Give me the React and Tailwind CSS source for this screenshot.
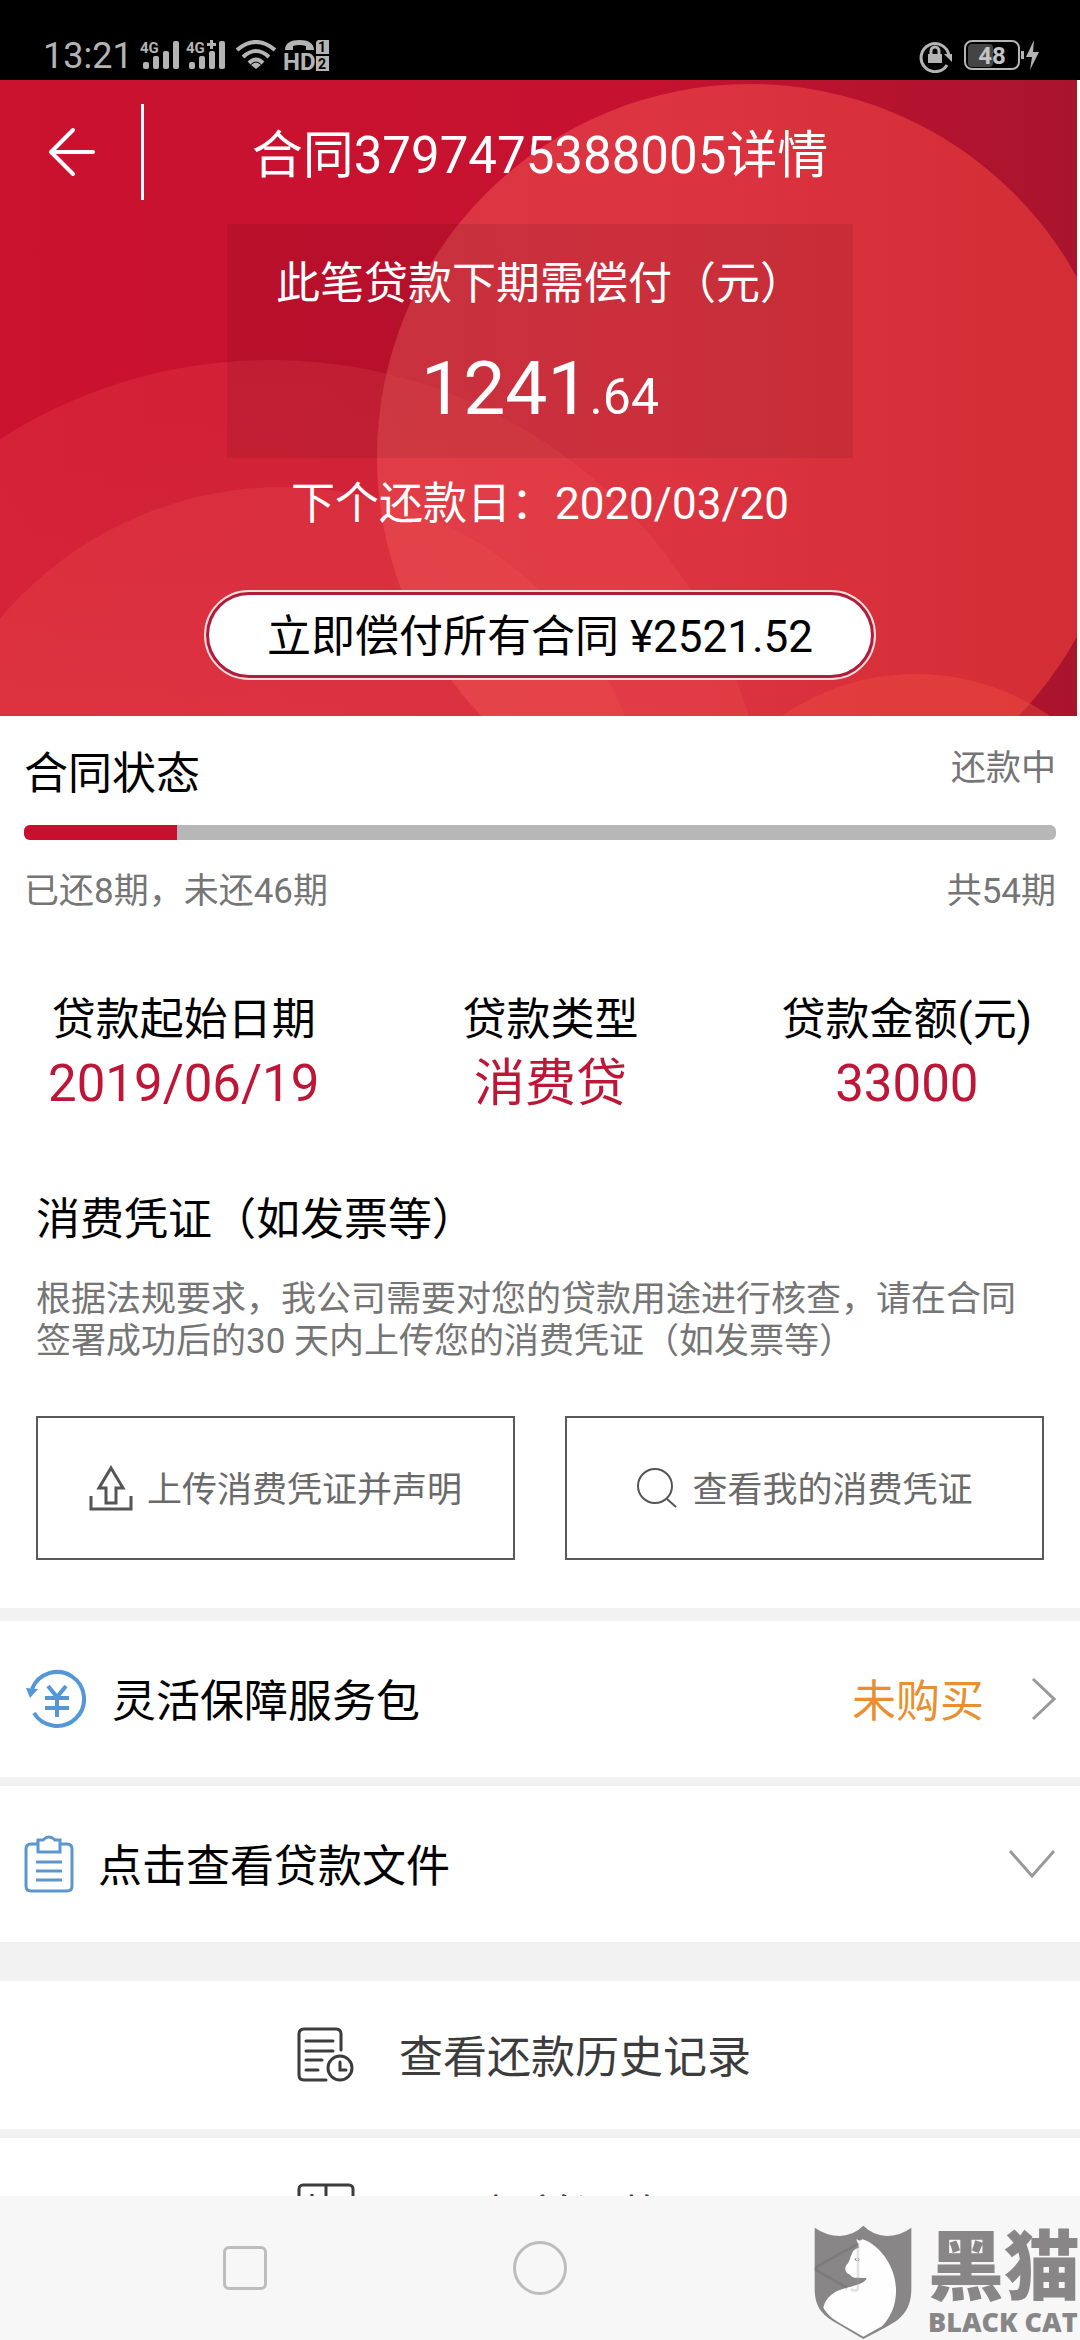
import React from "react";

function Signal({ label, plus }) {
  return (
    <svg className="overflow-visible" width="42" height="32" viewBox="0 0 42 32" fill="#b4b4b4" aria-hidden="true">
      <text x="1" y="13" fontSize="15" fontWeight="700" fontFamily="Roboto, sans-serif">{label}</text>
      {plus && <path d="M22 3h3V0h3v3h3v3h-3v3h-3V6h-3z" />}
      <rect x="4" y="22" width="6" height="7" rx="2" />
      <rect x="14" y="16" width="6" height="13" rx="2" />
      <rect x="24" y="11" width="6" height="18" rx="2" />
      <rect x="34" y="1" width="6" height="28" rx="2" />
    </svg>
  );
}

function StatusBar() {
  return (
    <div className="flex h-20 shrink-0 items-center justify-between bg-black pr-10 pl-[43px] pt-8 text-[#b4b4b4]">
      <div className="flex items-center">
        <span className="w-24 text-[36px] leading-8">13:21</span>
        <div className="flex items-center gap-1">
          <Signal label="4G" />
          <Signal label="4G" plus />
          <svg className="ml-1" width="42" height="32" viewBox="0 0 42 32" fill="none" stroke="#b4b4b4" strokeWidth="4" aria-hidden="true">
            <path d="M2 10Q21 -6 40 10" />
            <path d="M8 17Q21 5 34 17" />
            <path d="M14 23Q21 16 28 23" />
            <path d="M21 29l-5-4q5-5 10 0z" fill="#b4b4b4" stroke="none" />
          </svg>
          <svg className="ml-1 overflow-visible" width="44" height="32" viewBox="0 0 44 32" fill="#b4b4b4" aria-hidden="true">
            <path d="M0 10C0 3 6 0 14.500 0S29 3 29 10H21V6Q14.500 4 8 6V10z" />
            <text x="-2" y="30" fontSize="24" fontWeight="700" fontFamily="Roboto, sans-serif">HD</text>
            <path d="M33 0h11v14H31V2zM31 16h13v15H31z" />
            <g fill="#000" fontSize="14" fontWeight="700" fontFamily="Roboto, sans-serif">
              <text x="33" y="12">1</text>
              <text x="33" y="29">2</text>
            </g>
          </svg>
        </div>
      </div>
      <div className="flex items-center">
        <svg width="33" height="33" viewBox="0 0 33 33" fill="none" stroke="#b4b4b4" strokeWidth="3" aria-hidden="true">
          <path d="M28 25A14 14 0 1 1 30 16" />
          <path d="M25 14h8v8z" fill="#b4b4b4" stroke="none" />
          <rect x="9" y="14" width="14" height="9" fill="#b4b4b4" stroke="none" />
          <path d="M12 14v-3a4 4 0 0 1 8 0v3" />
        </svg>
        <svg className="ml-3" width="76" height="32" viewBox="0 0 76 32" aria-hidden="true">
          <rect x="4" y="4" width="25" height="23" rx="4" fill="#444" />
          <rect x="1" y="1" width="54" height="28" rx="7" fill="none" stroke="#b4b4b4" strokeWidth="2" />
          <text x="28" y="24" textAnchor="middle" fontSize="24" fontWeight="700" fill="#c4c4c4" fontFamily="Roboto, sans-serif">48</text>
          <rect x="57" y="11" width="3" height="8" fill="#b4b4b4" />
          <path d="M70 0L62 17h6l-2 13 9-18h-6z" fill="#b4b4b4" />
        </svg>
      </div>
    </div>
  );
}

function HeroArt() {
  return (
    <div className="absolute inset-y-0 left-0 right-[3px]">
      <svg className="h-full w-full" viewBox="0 80 1077 636" preserveAspectRatio="xMidYMid slice" aria-hidden="true">
        <defs>
          <linearGradient id="base" x1="0" x2="1">
            <stop offset="0" stopColor="#cb122f" />
            <stop offset="0.6" stopColor="#c51230" />
            <stop offset="1" stopColor="#a9142d" />
          </linearGradient>
          <linearGradient id="big" gradientUnits="userSpaceOnUse" x1="377" x2="1077" y1="0" y2="0">
            <stop offset="0" stopColor="#db3644" />
            <stop offset="0.400" stopColor="#dc3441" />
            <stop offset="1" stopColor="#d32d35" />
          </linearGradient>
          <linearGradient id="left" gradientUnits="userSpaceOnUse" x1="0" x2="0" y1="360" y2="716">
            <stop offset="0" stopColor="#ee5050" stopOpacity="0.240" />
            <stop offset="1" stopColor="#ee5050" stopOpacity="0.300" />
          </linearGradient>
        </defs>
        <rect y="80" width="1077" height="636" fill="url(#base)" />
        <circle cx="750" cy="457" r="373" fill="url(#big)" />
        <circle cx="270" cy="860" r="500" fill="url(#left)" />
        <circle cx="283" cy="857" r="370" fill="url(#left)" />
        <circle cx="916" cy="909" r="235" fill="#f05042" fillOpacity="0.400" />
      </svg>
    </div>
  );
}

function Hero() {
  return (
    <header className="relative pt-6 pb-9 text-white">
      <HeroArt />
      <div className="relative">
        <div className="flex h-24 items-center">
          <button type="button" aria-label="返回" className="flex h-24 w-36 items-center border-r-[3px] border-white pl-12">
            <svg width="48" height="50" viewBox="0 0 48 50" fill="none" stroke="#fff" strokeWidth="4" strokeLinecap="round" strokeLinejoin="round">
              <path d="M45 25H3M25 3L3 25l22 22" />
            </svg>
          </button>
          <h1 className="flex-1 pt-2 pr-36 text-center text-[51px] leading-[60px]">合同3797475388005详情</h1>
        </div>
        <div className="mx-auto mt-6 h-[234px] w-[58%] bg-black/8 pt-7 text-center">
          <p className="text-[44px] leading-[64px]">此笔贷款下期需偿付（元）</p>
          <p className="mt-6 text-[75px] leading-[96px]">
            1241<span className="text-[50px] leading-none">.64</span>
          </p>
        </div>
        <p className="mt-[14px] text-center text-[44px] leading-[64px]">下个还款日：2020/03/20</p>
        <div className="mt-[54px] flex justify-center">
          <button type="button" className="rounded-full border-2 border-[#fbdcdc] bg-[#b01c3c] p-[3px] text-black">
            <span className="block rounded-full bg-white px-[58px] pt-1 text-[44px] leading-[76px]">立即偿付所有合同 ¥2521.52</span>
          </button>
        </div>
      </div>
    </header>
  );
}

function ContractStatus() {
  const paid = 8;
  const total = 54;
  return (
    <section className="px-6 pt-6">
      <div className="flex justify-between">
        <h2 className="text-[44px] leading-[68px] text-black">合同状态</h2>
        <span className="text-[35px] leading-[58px] text-[#757575]">还款中</span>
      </div>
      <div role="progressbar" aria-valuenow={paid} aria-valuemax={total} aria-label="合同状态" className="mt-[17px] h-[15px] overflow-hidden rounded-md bg-[#b7b7b7]">
        <div className="h-full bg-[#c8102e]" style={{ width: `${(paid / total) * 100}%` }} />
      </div>
      <div className="mt-7 flex justify-between text-[35px] leading-[48px] text-[#757575]">
        <span>已还8期，未还46期</span>
        <span>共54期</span>
      </div>
    </section>
  );
}

const facts = [
  ["贷款起始日期", "2019/06/19"],
  ["贷款类型", "消费贷"],
  ["贷款金额(元)", "33000"],
];

function Facts() {
  return (
    <dl className="mt-[72px] flex justify-between px-12 text-center">
      {facts.map(([label, value]) => (
        <div key={label}>
          <dt className="text-[44px] leading-[64px] text-black">{label}</dt>
          <dd className="text-[51px] leading-[64px] text-[#be1637]">{value}</dd>
        </div>
      ))}
    </dl>
  );
}

function Voucher() {
  return (
    <section className="px-9 pt-[72px] pb-12">
      <h2 className="text-[44px] leading-[64px] text-black">消费凭证（如发票等）</h2>
      <p className="mt-[27px] text-[35px] leading-[42px] text-[#757575]">
        根据法规要求，我公司需要对您的贷款用途进行核查，请在合同签署成功后的30 天内上传您的消费凭证（如发票等）
      </p>
      <div className="mt-[53px] grid grid-cols-2 gap-[50px] text-[35px] text-[#6a6a6a]">
        <button type="button" className="flex h-36 items-center justify-center gap-[14px] border-2 border-[#5a5a5a]">
          <svg width="44" height="46" viewBox="0 0 44 46" fill="none" stroke="#555" strokeWidth="3">
            <path d="M22 3L34 23H27V38H17V23H10z" />
            <path d="M2 31V44H42V31" />
          </svg>
          <span className="pt-1.5">上传消费凭证并声明</span>
        </button>
        <button type="button" className="flex h-36 items-center justify-center gap-[14px] border-2 border-[#5a5a5a]">
          <svg width="42" height="42" viewBox="0 0 42 42" fill="none" stroke="#555" strokeWidth="2">
            <circle cx="19" cy="19" r="17" />
            <path d="M31 32L40 40" />
          </svg>
          <span className="pt-1.5">查看我的消费凭证</span>
        </button>
      </div>
    </section>
  );
}

function Rows() {
  return (
    <>
      <button type="button" className="flex h-[156px] w-full items-center bg-white px-6 text-[44px] text-black">
        <svg width="62" height="62" viewBox="0 0 62 62" fill="none" stroke="#5497d8" strokeWidth="4" aria-hidden="true">
          <path d="M8 21A27 27 0 1 1 10 45" />
          <path d="M2 20L14 21 6 30z" fill="#5497d8" stroke="none" />
          <path d="M24 18l9 11 9-11M21 30h24M21 40h24M33 29v20" />
        </svg>
        <span className="ml-[26px] flex-1 pt-1.5 text-left">灵活保障服务包</span>
        <span className="pt-1.5 text-[#e8902f]">未购买</span>
        <svg className="ml-[46px]" width="26" height="46" viewBox="0 0 26 46" fill="none" stroke="#999" strokeWidth="3" aria-hidden="true">
          <path d="M3 3L24 23 3 43" />
        </svg>
      </button>
      <button type="button" className="mt-[9px] flex h-[156px] w-full items-center bg-white px-6 text-[44px] text-black">
        <svg width="50" height="58" viewBox="0 0 50 58" fill="none" stroke="#5b97cc" strokeWidth="3" aria-hidden="true">
          <path d="M14 9H7Q2 9 2 14V51Q2 56 7 56H43Q48 56 48 51V14Q48 9 43 9H36" />
          <path d="M14 17V5H19Q25 -1 31 5H36V17z" />
          <path d="M12 27H38M12 36H38M12 45H38" />
        </svg>
        <span className="ml-6 flex-1 pt-1.5 text-left">点击查看贷款文件</span>
        <svg width="48" height="30" viewBox="0 0 48 30" fill="none" stroke="#999" strokeWidth="3" aria-hidden="true">
          <path d="M2 2L24 27 46 2" />
        </svg>
      </button>
      <button type="button" className="mt-[39px] flex h-[148px] w-full items-center justify-center bg-white pr-8 text-[44px] text-[#3c3c3c]">
        <svg width="58" height="56" viewBox="0 0 58 56" fill="none" stroke="#3c3c3c" strokeWidth="3" strokeLinecap="round" aria-hidden="true">
          <path d="M29 53H7Q2 53 2 48V7Q2 2 7 2H39Q44 2 44 7V23" />
          <path d="M9 14H36M9 24H36M9 33H25M9 43H21" />
          <circle cx="43" cy="41" r="12" />
          <path d="M43 35V43H49" />
        </svg>
        <span className="ml-11 w-[352px] pt-1.5">查看还款历史记录</span>
      </button>
      <button type="button" className="mt-[9px] flex h-[148px] w-full items-center justify-center bg-white pr-8 text-[44px] text-[#3c3c3c]">
        <svg width="58" height="58" viewBox="0 0 58 58" fill="none" stroke="#3c3c3c" strokeWidth="3" aria-hidden="true">
          <rect x="2" y="2" width="54" height="54" rx="4" />
          <path d="M29 2V56M2 29H56M15 11V21M10 16H20M36 16H48M10 38L20 48M20 38L10 48M36 40H48M36 46H48" />
        </svg>
        <span className="ml-11 w-[352px] pt-2.5">提前还款</span>
      </button>
    </>
  );
}

function Watermark() {
  return (
    <div className="pointer-events-none absolute right-0 bottom-0 flex items-end opacity-90" aria-label="黑猫 BLACK CAT">
      <svg width="98" height="116" viewBox="152 132 294 348" aria-hidden="true">
        <path
          fill="#7c7a7b"
          fillRule="evenodd"
          d="M154 143Q190 168 230 168Q272 165 300 137Q328 165 370 168Q410 168 444 143V325C444 385 420 415 370 440L300 477L220 430C175 405 154 380 154 325z"
        />
        <path
          fill="#fff"
          d="M279 177L289 182L298 178C350 195 396 260 398 325C400 375 382 412 356 439L300 470L225 427C200 412 185 395 180 382C188 350 215 333 245 325C280 315 306 310 310 294L273 293C262 290 262 283 254 281C245 276 243 262 250 254C262 245 260 225 272 210L287 202z"
        />
        <path fill="#777" d="M273 238Q281 228 289 238Q284 250 273 238z" />
        <circle cx="282" cy="238" r="4" fill="#fff" />
        <path
          fill="none"
          stroke="#5a5a5a"
          strokeOpacity="0.350"
          strokeWidth="8"
          strokeLinejoin="round"
          d="M286 190L160 260Q154 265 160 271L252 324"
        />
        <path fill="none" stroke="#999" strokeOpacity="0.300" strokeWidth="8" d="M284 192V320Q284 338 262 328" />
      </svg>
      <div className="ml-4 flex flex-col items-start text-[#7c7a7b]">
        <span className="text-[76px] leading-[70px] font-black">黑猫</span>
        <span className="font-['Open_Sans',sans-serif] text-[27px] leading-[37px] font-extrabold">BLACK CAT</span>
      </div>
    </div>
  );
}

function NavBar() {
  return (
    <nav className="relative grid h-36 shrink-0 grid-cols-3 place-items-center bg-[#f7f7f7] px-[9%]">
      <button type="button" aria-label="最近任务" className="h-11 w-11 rounded-md border-[3px] border-[#bdbdbd]" />
      <button type="button" aria-label="主页" className="h-[54px] w-[54px] rounded-full border-[3px] border-[#bdbdbd]" />
      <button type="button" aria-label="后退" className="h-14 w-12" />
      <Watermark />
    </nav>
  );
}

export default function App() {
  return (
    <div className="flex h-screen flex-col overflow-hidden bg-white font-[Roboto,'Noto_Sans_CJK_SC',sans-serif]">
      <StatusBar />
      <main className="min-h-0 flex-1 overflow-hidden bg-[#f2f2f2]">
        <div className="mb-[13px] bg-white">
          <Hero />
          <ContractStatus />
          <Facts />
          <Voucher />
        </div>
        <Rows />
      </main>
      <NavBar />
    </div>
  );
}
